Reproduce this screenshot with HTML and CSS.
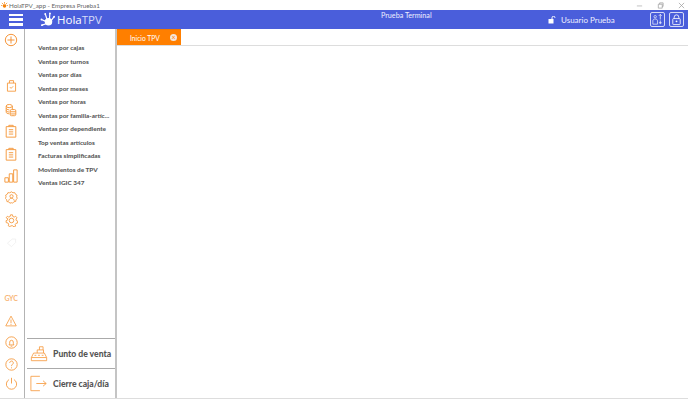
FILE: index.html
```html
<!DOCTYPE html>
<html lang="es">
<head>
<meta charset="utf-8">
<title>HolaTPV_app</title>
<link rel="stylesheet" href="styles.css">
</head>
<body>
<div class="window">
  <div class="titlebar">
    <svg class="app-icon" viewBox="0 0 8 8"><circle cx="4" cy="4.500" r="2" fill="#f5820a"/><path d="M1 1 3 3M4 0v2M7 1 5 3M0 4h1.500M8 4H6.500" stroke="#f5820a" stroke-width=".8"/></svg>
    <span class="title-text">HolaTPV_app - Empresa Prueba1</span>
    <div class="win-controls">
      <svg class="win-btn" viewBox="0 0 8 8"><path d="M1 4.500h6" stroke="#aaa" stroke-width=".8"/></svg>
      <svg class="win-btn" viewBox="0 0 8 8"><path d="M1.500 2.500h4.500v4.500h-4.500zM3 2.500V1h4v4H6" fill="none" stroke="#999" stroke-width=".8"/></svg>
      <svg class="win-btn" viewBox="0 0 8 8"><path d="M1 1 7 7M7 1 1 7" stroke="#999" stroke-width=".8"/></svg>
    </div>
  </div>
  <header class="topbar">
    <div class="burger"><i></i><i></i><i></i></div>
    <div class="logo">
      <svg class="logo-mark" viewBox="0 0 18 16"><circle cx="9" cy="10.500" r="4" fill="#fff"/><path d="M7.500 8 5.500 2M10 7.500 10.500 1M12 9l3-4M6 10 1.500 8M6.500 12.500 2 14" stroke="#fff" stroke-width="1.300" fill="none"/><circle cx="5.500" cy="2" r="1" fill="#fff"/><circle cx="10.500" cy="1.500" r="1" fill="#fff"/><circle cx="15" cy="5" r="1" fill="#fff"/><circle cx="1.500" cy="8" r="1" fill="#fff"/><circle cx="2" cy="14" r="1" fill="#fff"/></svg>
      <span class="logo-text"><b>Hola</b>TPV</span>
    </div>
    <div class="terminal">Prueba Terminal</div>
    <div class="user">
      <svg class="user-lock" viewBox="0 0 8 8"><path d="M4 3V1.800a1.500 1.500 0 0 1 3 0" fill="none" stroke="#fff" stroke-width="1"/><rect x=".5" y="3" width="5" height="4.500" fill="#fff"/></svg>
      <span>Usuario Prueba</span>
    </div>
    <div class="top-btns">
      <div class="top-btn">
        <svg viewBox="0 0 14 14"><circle cx="4.500" cy="4" r="1.300" fill="none" stroke="#fff" stroke-width=".7"/><path d="M2 12V8.500C2 7 3 6.500 4.500 6.500S7 7 7 8.500V12z" fill="none" stroke="#fff" stroke-width=".7"/><path d="M10 1.500v5.500M8.500 3l1.500-1.500L11.500 3M8.500 10.500h3M10 8v4" fill="none" stroke="#fff" stroke-width=".8"/></svg>
      </div>
      <div class="top-btn">
        <svg viewBox="0 0 14 14"><path d="M4.500 6V4.500a2.500 2.500 0 0 1 5 0V6" fill="none" stroke="#fff" stroke-width=".9"/><rect x="3" y="6" width="8" height="6.500" rx=".8" fill="none" stroke="#fff" stroke-width=".9"/><circle cx="7" cy="9" r="1" fill="#fff"/></svg>
      </div>
    </div>
  </header>
  <div class="main">
    <nav class="rail">
      <svg class="ico plus" viewBox="0 0 16 16"><circle cx="8" cy="8" r="6.500"/><path d="M8 4v8M4 8h8"/></svg>
      <svg class="ico bag" viewBox="0 0 16 16"><path d="M3 5h10v10H3zM5.500 5V2h5v3M6 10l1.500 1.500L10 9"/></svg>
      <svg class="ico coins" viewBox="0 0 16 16"><ellipse cx="6" cy="3.500" rx="3.500" ry="1.800"/><path d="M2.500 3.500v7c0 1 1.500 1.800 3.500 1.800M9.500 3.500V7"/><rect x="7" y="7.500" width="6.500" height="7" rx="1.500"/><path d="M7 10h6.500M7 12.500h6.500M2.500 6c0 1 1.500 1.800 3.500 1.800M2.500 8.500c0 1 1.500 1.800 3.500 1.800"/></svg>
      <svg class="ico clip" viewBox="0 0 16 16"><path d="M2.500 3h11v12h-11zM5.500 3V1.500h5V3M5.500 6.500h5M5.500 9h5M5.500 11.500h5"/></svg>
      <svg class="ico clip" viewBox="0 0 16 16"><path d="M2.500 3h11v12h-11zM5.500 3V1.500h5V3M5.500 6.500h5M5.500 9h5M5.500 11.500h5"/></svg>
      <svg class="ico bars" viewBox="0 0 16 16"><path d="M1 10h4v5H1zM6 5.500h4V15H6zM11 1h4v14h-4z"/></svg>
      <svg class="ico gear-user" viewBox="0 0 16 16"><path d="M8 1l1.800 1.200 2.200-.2.900 2 1.900 1.100-.5 2.100.8 2-1.600 1.500-.3 2.200-2.200.3L9.400 15 8 14.400 6 15l-1.400-1.700-2.200-.3-.3-2.200L.5 9.200l.8-2-.5-2.100 1.900-1.100.9-2 2.200.2z"/><circle cx="8" cy="6.500" r="2"/><path d="M4.500 12c.5-2 2-3 3.500-3s3 1 3.500 3"/></svg>
      <svg class="ico gear" viewBox="0 0 16 16"><path d="M6.800 1h2.400l.4 2 1.700.8 1.800-1 1.500 1.800-1.100 1.700.4 1.700 1.800.8-.2 2.300-2 .4-1 1.500.5 2-2 1-1.400-1.500H7.400L6 15.500l-2-1 .5-2-1-1.500-2-.4-.2-2.300 1.800-.8.4-1.700L1.400 4.600l1.500-1.800 1.800 1 1.700-.8z"/><circle cx="8" cy="8" r="2.800"/></svg>
      <svg class="ico tag" viewBox="0 0 16 16"><path d="M2 9 9 3h5v5l-6 6z"/></svg>
      <div class="gyc">GYC</div>
      <svg class="ico warn" viewBox="0 0 16 16"><path d="M8 1.500 15 14.500H1zM8 6v5M8 12v1.200"/></svg>
      <svg class="ico bell" viewBox="0 0 16 16"><circle cx="8" cy="8" r="7"/><path d="M5 11c.8-.8.8-2 .8-3.500a2.200 2.200 0 0 1 4.400 0c0 1.500 0 2.700.8 3.500zM7 12.500h2"/></svg>
      <svg class="ico help" viewBox="0 0 16 16"><circle cx="8" cy="8" r="7"/><path d="M5.800 6a2.200 2.200 0 1 1 3.400 1.800C8.300 8.400 8 9 8 10M8 11.500v1.200"/></svg>
      <svg class="ico power" viewBox="0 0 16 16"><path d="M5 3.200a6.300 6.300 0 1 0 6 0M8 1v7"/></svg>
    </nav>
    <aside class="submenu">
      <ul class="menu-list">
        <li>Ventas por cajas</li>
        <li>Ventas por turnos</li>
        <li>Ventas por días</li>
        <li>Ventas por meses</li>
        <li>Ventas por horas</li>
        <li>Ventas por familia-artíc...</li>
        <li>Ventas por dependiente</li>
        <li>Top ventas artículos</li>
        <li>Facturas simplificadas</li>
        <li>Movimientos de TPV</li>
        <li>Ventas IGIC 347</li>
      </ul>
      <div class="action">
        <svg class="action-icon" viewBox="0 0 20 18"><path d="M1.500 17h17v-3.500l-2.500-5H4l-2.500 5zM1.500 13.500h17M5 11h2M9 11h2M13 11h2M8 8.500V5h7v3.500M10.500 5V1.500h4V5"/></svg>
        <span>Punto de venta</span>
      </div>
      <div class="action">
        <svg class="action-icon" viewBox="0 0 20 18"><path d="M11 1H1v16h10M7 9h11M14.500 6 18 9l-3.500 3"/></svg>
        <span>Cierre caja/día</span>
      </div>
    </aside>
    <section class="content">
      <div class="tabs">
        <div class="tab">
          <span>Inicio TPV</span>
          <span class="tab-close">×</span>
        </div>
      </div>
      <div class="tab-body"></div>
    </section>
  </div>
  <div class="statusline"></div>
</div>
</body>
</html>
```
FILE: styles.css
```css
* { box-sizing: border-box; }
html, body { margin: 0; padding: 0; height: 100%; background: #fff; }
body { font-family: Lato, "Open Sans", sans-serif; overflow: hidden; }
.window { width: 688px; height: 407px; display: flex; flex-direction: column; background: #fff; }

.titlebar { height: 10px; flex: none; display: flex; align-items: center; padding-left: 1px; color: #666; font-size: 6.300px; background: #fff; }
.app-icon { width: 7px; height: 7px; margin-right: 1px; }
.title-text { line-height: 7px; }
.win-controls { margin-left: auto; display: flex; gap: 14px; padding-right: 3px; }
.win-btn { width: 7px; height: 7px; }

.topbar { height: 19px; flex: none; background: #4a5edb; display: flex; align-items: center; color: #fff; }
.burger { width: 14px; height: 12px; margin-left: 9px; display: flex; flex-direction: column; justify-content: space-between; }
.burger i { display: block; height: 2.500px; background: #fff; }
.logo { display: flex; align-items: center; margin-left: 17px; width: 341px; }
.logo-mark { width: 17px; height: 15px; }
.logo-text { font-family: "Open Sans", sans-serif; font-size: 11.500px; color: #d5dbf8; }
.logo-text b { font-weight: 400; color: #fff; }
.terminal { width: 167px; font-size: 7.200px; margin-top: -9px; color: #eef; }
.user { display: flex; align-items: center; font-size: 8px; color: #eef; width: 102px; }
.user-lock { width: 8px; height: 8px; margin-right: 5px; }
.top-btns { display: flex; gap: 4px; }
.top-btn { width: 15px; height: 15px; border: 1px solid #d5dbf7; border-radius: 2px; display: flex; }
.top-btn svg { width: 100%; height: 100%; }

.main { flex: 1; display: flex; min-height: 0; }
.rail { width: 25px; flex: none; border-right: 1px solid #b3b3b3; display: flex; flex-direction: column; align-items: center; padding: 4px 2px 0 0; background: #fff; }
.ico { width: 13px; height: 13px; flex: none; fill: none; stroke: #f59a3f; stroke-width: 1.100; }
.plus { width: 14px; height: 14px; stroke: #f59133; margin-bottom: 32px; }
.bag { margin-bottom: 11px; }
.coins { margin-bottom: 7px; width: 14px; height: 14px; }
.clip { margin-bottom: 8.500px; width: 14px; height: 14px; }
.bars { margin-bottom: 8px; width: 14px; height: 14px; }
.gear-user { margin-bottom: 10px; }
.gear { margin-bottom: 10px; }
.tag { stroke: #eeeeee; margin-bottom: 46px; width: 11px; height: 11px; }
.gyc { font-size: 7px; color: #f8b77a; font-weight: 700; height: 9px; line-height: 9px; margin-bottom: 12px; letter-spacing: -.2px; }
.warn { margin-bottom: 9px; width: 12px; height: 12px; }
.bell { margin-bottom: 9px; }
.help { margin-bottom: 6px; }

.submenu { width: 92px; flex: none; border-right: 2px solid #c4c4c4; display: flex; flex-direction: column; padding-left: 2px; }
.menu-list { list-style: none; margin: 0 0 auto; padding: 12px 0 0 11px; font-size: 6.400px; font-weight: 900; color: #5a5a5a; }
.menu-list li { height: 13.500px; line-height: 13.500px; white-space: nowrap; }
.action { height: 30px; border-top: 1px solid #aaa; display: flex; align-items: center; font-size: 8.600px; font-weight: 900; color: #555; white-space: nowrap; }
.action-icon { width: 18px; height: 17px; margin-left: 3px; margin-right: 5px; fill: none; stroke: #f7a24d; stroke-width: 1; }

.content { flex: 1; display: flex; flex-direction: column; min-width: 0; }
.tabs { height: 17px; flex: none; border-bottom: 1px solid #ddd; display: flex; }
.tab { width: 64px; background: #ff7f00; color: #fff; display: flex; align-items: center; font-size: 6.700px; padding-left: 13px; border-top: 1px solid #f07800; }
.tab-close { width: 7px; height: 7px; border-radius: 50%; background: #f3e8e0; color: #ff7f00; margin-left: auto; margin-right: 4px; font-size: 7px; line-height: 7px; text-align: center; }
.tab-body { flex: 1; }
.statusline { height: 9px; flex: none; border-top: 1px solid #ddd; background: #fff; }
```
